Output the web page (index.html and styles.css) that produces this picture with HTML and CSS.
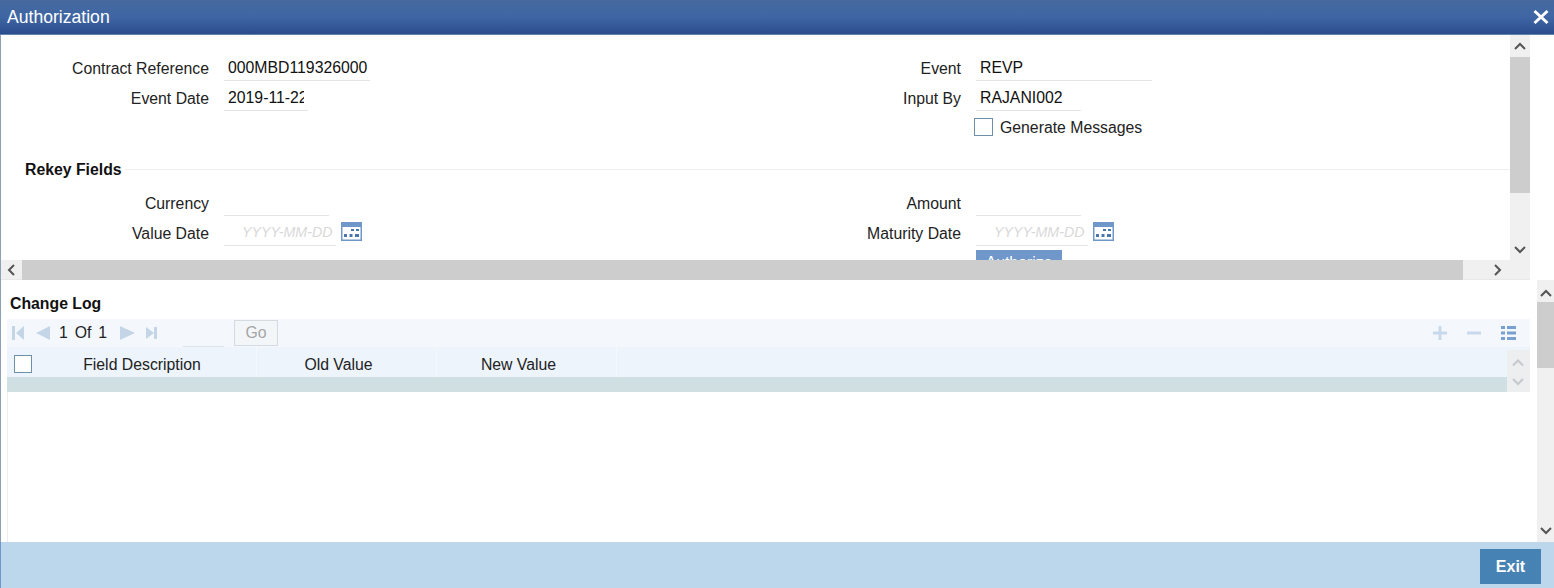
FILE: index.html
```html
<!DOCTYPE html>
<html lang="en">
<head>
<meta charset="utf-8">
<title>Authorization</title>
<link rel="stylesheet" href="styles.css">
</head>
<body>
<div class="window">
  <header class="titlebar">
    <span class="title">Authorization</span>
    <svg class="close" width="16" height="16" viewBox="0 0 16 16"><path d="M1.500 2 L14.500 14 M14.500 2 L1.500 14" stroke="#fff" stroke-width="3"/></svg>
  </header>

  <section class="upper">
    <div class="upper-body">
      <div class="form">
        <div class="grid top-grid">
          <label class="lbl">Contract Reference</label>
          <div class="val w146">000MBD119326000</div>
          <label class="lbl">Event</label>
          <div class="val w176">REVP</div>
          <label class="lbl">Event Date</label>
          <div class="val w84"><span class="clip">2019-11-22</span></div>
          <label class="lbl">Input By</label>
          <div class="val w105">RAJANI002</div>
          <span></span><span></span><span></span>
          <div class="check-row"><span class="check"></span><span class="gen">Generate Messages</span></div>
        </div>
        <div class="legend"><h2>Rekey Fields</h2><span class="rule"></span></div>
        <div class="grid rekey-grid">
          <label class="lbl">Currency</label>
          <div class="val w105"></div>
          <label class="lbl">Amount</label>
          <div class="val w105"></div>
          <label class="lbl">Value Date</label>
          <div class="date">
            <div class="val w112 ph">YYYY-MM-DD</div>
            <svg class="cal" width="21" height="19" viewBox="0 0 21 19"><rect width="21" height="19" fill="#6f97c9"/><rect x="1.5" y="5" width="18" height="12.5" fill="#fff"/><path d="M10 7h3v2h-3zM15 7h3v2h-3zM3 12h3v3H3zM8.500 12h3v3h-3zM14 12h4v3h-4z" fill="#4a76b0"/></svg>
          </div>
          <label class="lbl">Maturity Date</label>
          <div class="date">
            <div class="val w112 ph">YYYY-MM-DD</div>
            <svg class="cal" width="21" height="19" viewBox="0 0 21 19"><rect width="21" height="19" fill="#6f97c9"/><rect x="1.500" y="5" width="18" height="12.5" fill="#fff"/><path d="M10 7h3v2h-3zM15 7h3v2h-3zM3 12h3v3H3zM8.500 12h3v3h-3zM14 12h4v3h-4z" fill="#4a76b0"/></svg>
          </div>
          <span></span><span></span><span></span>
          <button class="auth">Authorize</button>
        </div>
      </div>
      <div class="vbar vbar-top">
        <svg class="arr" width="20" height="22" viewBox="0 0 20 22"><path d="M5 14 L10 9 L15 14" fill="none" stroke="#555" stroke-width="2"/></svg>
        <div class="thumb t1"></div>
        <div class="spacer"></div>
        <svg class="arr" width="20" height="22" viewBox="0 0 20 22"><path d="M5 9 L10 14 L15 9" fill="none" stroke="#555" stroke-width="2"/></svg>
      </div>
    </div>
    <div class="hbar">
      <svg width="21" height="20" viewBox="0 0 21 20"><path d="M13 5 L8 10 L13 15" fill="none" stroke="#555" stroke-width="2"/></svg>
      <div class="hthumb"></div>
      <svg class="harr-r" width="20" height="20" viewBox="0 0 20 20"><path d="M11 5 L16 10 L11 15" fill="none" stroke="#555" stroke-width="2"/></svg>
    </div>
  </section>

  <section class="lower">
    <div class="lower-body">
      <h2 class="log-title">Change Log</h2>
      <div class="toolbar">
        <div class="pager">
          <svg width="48" height="14" viewBox="0 0 48 14"><path d="M1 0h3v14H1zM13 0v14L5 7zM39 0v14L25 7z" fill="#c5d5e8"/></svg>
          <span class="pages">1 Of 1</span>
          <svg width="52" height="14" viewBox="0 0 52 14"><path d="M15 0v14l15-7zM41 1v12l8-6zM49 1h3v12h-3z" fill="#c5d5e8"/></svg>
          <span class="goinput"></span>
          <button class="go">Go</button>
        </div>
        <div class="tools">
          <svg width="14" height="14" viewBox="0 0 14 14"><path d="M5.500 0h3v14h-3zM0 5.500h14v3H0z" fill="#c9d9ec"/></svg>
          <svg width="14" height="14" viewBox="0 0 14 14"><path d="M0 5.500h14v3H0z" fill="#c9d9ec"/></svg>
          <svg width="15" height="16" viewBox="0 0 15 16"><path d="M0 1h4v3H0zM6 1h9v3H6zM0 6.500h4v3H0zM6 6.500h9v3H6zM0 12h4v3H0zM6 12h9v3H6z" fill="#78a0d0"/></svg>
        </div>
      </div>
      <div class="table">
        <div class="table-main">
          <div class="thead">
            <div class="th th-check"><span class="check small"></span></div>
            <div class="th th-f">Field Description</div>
            <div class="th th-c">Old Value</div>
            <div class="th th-c">New Value</div>
          </div>
          <div class="trow"></div>
        </div>
        <div class="tbar">
          <svg width="23" height="21" viewBox="0 0 23 21"><path d="M6 15.500 L11 10.500 L16 15.500" fill="none" stroke="#c4c9ce" stroke-width="2"/></svg>
          <svg width="23" height="21" viewBox="0 0 23 21"><path d="M6 8 L11 13 L16 8" fill="none" stroke="#c4c9ce" stroke-width="2"/></svg>
        </div>
      </div>
      <div class="empty"></div>
    </div>
    <div class="vbar vbar-low">
      <svg class="arr" width="17" height="22" viewBox="0 0 17 22"><path d="M4 16 L9 11 L14 16" fill="none" stroke="#555" stroke-width="2"/></svg>
      <div class="thumb t2"></div>
      <div class="spacer"></div>
      <svg class="arr" width="17" height="22" viewBox="0 0 17 22"><path d="M4 8 L9 13 L14 8" fill="none" stroke="#555" stroke-width="2"/></svg>
    </div>
  </section>

  <footer class="footer"><button class="exit">Exit</button></footer>
</div>
</body>
</html>
```
FILE: styles.css
```css
* { box-sizing: border-box; }
html, body { margin: 0; padding: 0; background: #fff; }
body { font-family: "Liberation Sans", Arial, sans-serif; font-size: 15.8px; color: #222; overflow: hidden; }
h2 { margin: 0; font-size: 15.8px; font-weight: bold; color: #111; }

.window { width: 1554px; height: 588px; display: flex; flex-direction: column; border-left: 1px solid #8f9fb8; }

.titlebar { flex: 0 0 35px; margin-left: -1px; display: flex; align-items: center; justify-content: space-between; padding: 0 5px 0 7px; background: linear-gradient(#46699f, #3f66a4 50%, #2b4d8c); border-bottom: 1px solid #5f82b0; color: #fff; }
.title { font-size: 17.6px; }
.close { display: block; }

.upper { flex: 0 0 245px; width: 1529px; display: flex; flex-direction: column; }
.upper-body { flex: 0 0 225px; display: flex; overflow: hidden; }
.form { flex: 1; min-width: 0; overflow: hidden; padding-top: 18px; }

.grid { display: grid; grid-template-columns: 208px 544px 208px 1fr; grid-auto-rows: 30px; column-gap: 0; }
.top-grid { grid-template-rows: 30px 30px 28px; height: 100px; }
.rekey-grid { height: 120px; }
.lbl { text-align: right; line-height: 32px; }
.grid > .val, .grid > .date, .grid > .check-row, .grid > .auth { margin-left: 15px; }

.val { height: 28px; line-height: 29px; padding-left: 4px; border-bottom: 1px solid #e4e4e4; color: #111; white-space: nowrap; overflow: hidden; }
.w146 { width: 146px; }
.w176 { width: 176px; }
.w84 { width: 84px; }
.w105 { width: 105px; }
.w112 { width: 112px; }
.clip { display: block; width: 76px; overflow: hidden; }
.ph { font-style: italic; color: #d8d8d8; font-size: 14.200px; padding-left: 18px; }
.date { display: flex; align-items: flex-start; gap: 5px; }
.cal { display: block; margin-top: 4px; }

.check-row { display: flex; align-items: center; gap: 7px; margin-left: 13px !important; height: 27px; }
.check { display: block; width: 19px; height: 18px; background: #fff; border: 1px solid #6f8ea8; }
.check.small { width: 18px; height: 18px; }
.gen { padding-top: 2px; }

.legend { display: flex; align-items: center; padding-left: 24px; height: 20px; margin-top: 6px; margin-bottom: 9px; }
.legend h2 { margin-right: 3px; padding-top: 2px; }
.rule { flex: 1; height: 1px; background: #efefef; }

.auth { grid-column: 4; width: 86px; height: 26px; margin-top: 2px; padding: 0; border: 0; background: #6f97c9; color: #fff; font: 15.8px "Liberation Sans", Arial, sans-serif; }

.vbar { display: flex; flex-direction: column; background: #f0f0f0; }
.vbar-top { flex: 0 0 20px; }
.arr { display: block; flex: 0 0 auto; }
.thumb { background: #cdcdcd; flex: 0 0 auto; }
.t1 { height: 136px; }
.t2 { height: 66px; }
.spacer { flex: 1; }

.hbar { flex: 0 0 20px; min-height: 0; overflow: hidden; display: flex; background: #f0f0f0; box-shadow: inset 0 -1px 0 #e8e8e8; }
.hbar svg { flex: 0 0 auto; }
.hthumb { width: 1441px; background: #cdcdcd; }
.harr-r { margin-left: 21px; }

.lower { flex: 0 0 262px; min-height: 0; display: flex; }
.lower-body { width: 1529px; display: flex; flex-direction: column; padding-left: 6px; }
.log-title { padding: 14px 0 0 3px; flex: 0 0 39px; line-height: 19px; }
.toolbar { flex: 0 0 28px; display: flex; justify-content: space-between; align-items: center; background: #f4f8fd; padding: 0 14px 0 4px; }
.pager { display: flex; align-items: center; }
.pages { width: 46px; word-spacing: 2.500px; color: #222; white-space: nowrap; }
.goinput { display: block; width: 41px; height: 27px; border-bottom: 1px solid #dde3e8; margin-left: 26px; }
.go { width: 44px; height: 26px; margin-left: 10px; padding: 0; background: #f3f6f9; border: 1px solid #d5dbe0; color: #a5a5a5; font: 15.8px "Liberation Sans", Arial, sans-serif; }
.tools { display: flex; gap: 20px; align-items: center; }

.table { flex: 0 0 45px; display: flex; background: #edf4fc; }
.table-main { flex: 1; display: flex; flex-direction: column; }
.thead { flex: 0 0 30px; min-height: 0; overflow: hidden; display: flex; }
.th { height: 30px; line-height: 36px; padding-right: 16px; text-align: center; border-right: 1px solid #f4f8fd; }
.th-check { width: 37px; padding: 8px 0 0 7px; border-right: 0; }
.th-f { width: 213px; }
.th-c { width: 180px; }
.trow { flex: 1; background: #d0dfe2; }
.tbar { flex: 0 0 23px; display: flex; flex-direction: column; margin-top: 3px; background: #eceeef; }
.tbar svg { display: block; }
.empty { flex: 1; border-left: 1px solid #eeeeee; }

.vbar-low { flex: 0 0 17px; margin-left: 7px; }

.footer { flex: 1; margin-left: -1px; display: flex; justify-content: flex-end; align-items: flex-start; padding: 7px 13px 0 0; background: #bcd7ec; border-left: 1px solid #6f97c9; }
.exit { width: 61px; height: 35px; padding: 0; border: 0; background: #4682b4; color: #fff; font: bold 16px "Liberation Sans", Arial, sans-serif; }
```
